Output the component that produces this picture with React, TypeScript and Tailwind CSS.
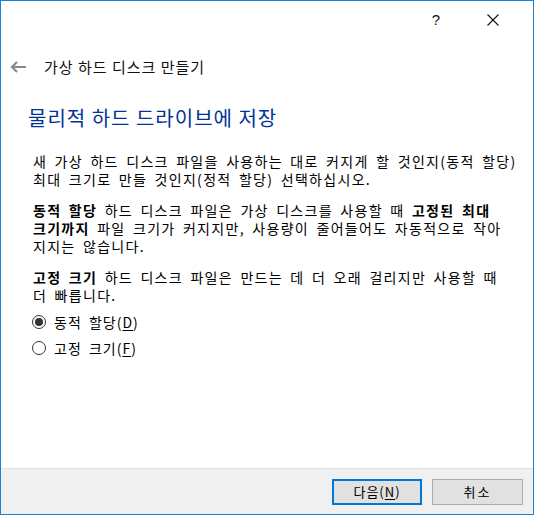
const Radio = ({ checked, label, hotkey }: { checked?: boolean; label: string; hotkey: string }) => (
  <div className="flex h-[26px] items-center">
    <span className="ml-[31px] flex h-[14px] w-[14px] items-center justify-center rounded-full border border-[#333333] bg-white">
      {checked && <span className="h-[8px] w-[8px] rounded-full bg-[#333333]" />}
    </span>
    <span className="ml-[8px] text-[14px] leading-[18px] tracking-[1px] [word-spacing:3px]">
      {label}(<span className="underline underline-offset-2">{hotkey}</span>)
    </span>
  </div>
)

export default function App() {
  return (
    <div className="flex h-[515px] w-[534px] flex-col border border-[#1883d7] bg-white font-['Noto_Sans_CJK_KR','Liberation_Sans',sans-serif] text-black">
      {/* title bar */}
      <div className="flex h-[38px] items-center justify-end pr-[34px]">
        <span className="mb-[1px] font-['Liberation_Sans',sans-serif] text-[15px] leading-none text-[#111]">?</span>
        <svg width="12" height="12" viewBox="0 0 12 12" className="ml-[47px]">
          <path d="M0.5 0.5 L11.5 11.5 M11.5 0.5 L0.5 11.5" stroke="#111" strokeWidth="1.1" />
        </svg>
      </div>

      {/* back + title */}
      <div className="mt-[16px] flex h-[24px] items-center">
        <svg width="17" height="12" viewBox="0 0 17 12" className="ml-[9px]">
          <path d="M16 6 H2 M7 1 L2 6 L7 11" stroke="#8a8a8a" strokeWidth="2.2" fill="none" />
        </svg>
        <span className="ml-[17px] text-[15px] leading-[24px] tracking-[1px] text-[#111]">가상 하드 디스크 만들기</span>
      </div>

      <div className="ml-[27px] mt-[25px] text-[20px] leading-[28px] tracking-[1px] text-[#003399]">물리적 하드 드라이브에 저장</div>

      <div className="ml-[32px] mt-[20px] whitespace-nowrap text-[14px] leading-[18px] tracking-[1.3px] [word-spacing:3px]">
        <p>
          새 가상 하드 디스크 파일을 사용하는 대로 커지게 할 것인지(동적 할당)
          <br />
          최대 크기로 만들 것인지(정적 할당) 선택하십시오.
        </p>
        <p className="mt-[13px]">
          <b>동적 할당</b> 하드 디스크 파일은 가상 디스크를 사용할 때 <b>고정된 최대</b>
          <br />
          <b>크기까지</b> 파일 크기가 커지지만, 사용량이 줄어들어도 자동적으로 작아
          <br />
          지지는 않습니다.
        </p>
        <p className="mt-[13px]">
          <b>고정 크기</b> 하드 디스크 파일은 만드는 데 더 오래 걸리지만 사용할 때
          <br />
          더 빠릅니다.
        </p>
      </div>

      <div className="mt-[5px]">
        <Radio checked label="동적 할당" hotkey="D" />
        <Radio label="고정 크기" hotkey="F" />
      </div>

      <div className="flex-1" />

      {/* footer */}
      <div className="flex h-[46px] items-center justify-end gap-[10px] border-t border-[#dfdfdf] bg-[#f0f0f0] pr-[10px]">
        <button className="flex h-[26px] w-[90px] items-center justify-center border-2 border-[#0078d7] bg-[#e1e1e1] text-[13px] tracking-[1px]">
          다음(<span className="underline underline-offset-2">N</span>)
        </button>
        <button className="flex h-[26px] w-[91px] items-center justify-center border border-[#adadad] bg-[#e1e1e1] text-[13px] tracking-[2px]">
          취소
        </button>
      </div>
    </div>
  )
}
